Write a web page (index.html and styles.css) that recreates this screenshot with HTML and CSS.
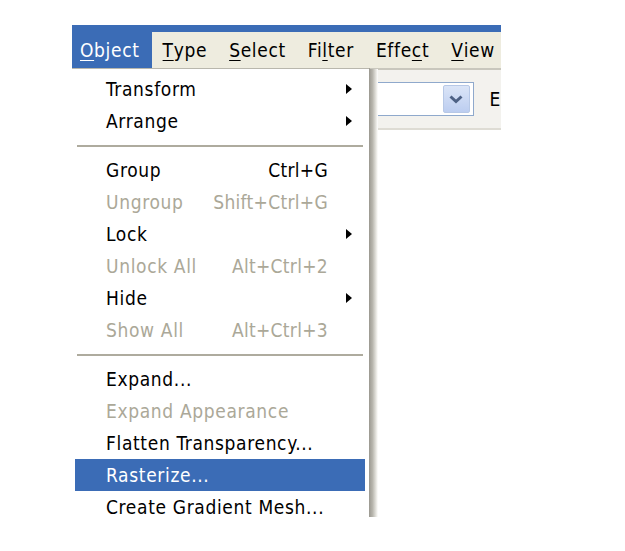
FILE: index.html
```html
<!DOCTYPE html>
<html>
<head>
<meta charset="utf-8">
<link rel="stylesheet" href="styles.css">
</head>
<body>
<div class="window">
  <div class="titlebar"></div>
  <div class="menubar">
    <span class="mb-item active"><u>O</u>bject</span>
    <span class="mb-item"><u>T</u>ype</span>
    <span class="mb-item"><u>S</u>elect</span>
    <span class="mb-item">Fi<u>l</u>ter</span>
    <span class="mb-item">Effe<u>c</u>t</span>
    <span class="mb-item"><u>V</u>iew</span>
  </div>
  <div class="toolbar">
    <div class="combo">
      <div class="combo-btn">
        <svg width="14" height="9" viewBox="0 0 14 9"><path d="M1.5 1.5 L7 6.5 L12.5 1.5" fill="none" stroke="#4d6185" stroke-width="3"/></svg>
      </div>
    </div>
    <span class="tb-label">E</span>
  </div>
  <div class="canvas"></div>

  <div class="menu">
    <div class="row"><span class="label">Transform</span><span class="key"></span><span class="arrow"></span></div>
    <div class="row"><span class="label">Arrange</span><span class="key"></span><span class="arrow"></span></div>
    <div class="sep"></div>
    <div class="row"><span class="label">Group</span><span class="key">Ctrl+G</span><span class="noarrow"></span></div>
    <div class="row disabled"><span class="label">Ungroup</span><span class="key">Shift+Ctrl+G</span><span class="noarrow"></span></div>
    <div class="row"><span class="label">Lock</span><span class="key"></span><span class="arrow"></span></div>
    <div class="row disabled"><span class="label">Unlock All</span><span class="key">Alt+Ctrl+2</span><span class="noarrow"></span></div>
    <div class="row"><span class="label">Hide</span><span class="key"></span><span class="arrow"></span></div>
    <div class="row disabled"><span class="label">Show All</span><span class="key">Alt+Ctrl+3</span><span class="noarrow"></span></div>
    <div class="sep"></div>
    <div class="row"><span class="label">Expand...</span><span class="key"></span><span class="noarrow"></span></div>
    <div class="row disabled"><span class="label">Expand Appearance</span><span class="key"></span><span class="noarrow"></span></div>
    <div class="row"><span class="label">Flatten Transparency...</span><span class="key"></span><span class="noarrow"></span></div>
    <div class="row selected"><span class="label">Rasterize...</span><span class="key"></span><span class="noarrow"></span></div>
    <div class="row"><span class="label">Create Gradient Mesh...</span><span class="key"></span><span class="noarrow"></span></div>
  </div>
</div>
</body>
</html>
```

FILE: styles.css
```css
html, body {
  margin: 0;
  padding: 0;
  background: #ffffff;
}

body {
  font-family: "DejaVu Sans Condensed", "DejaVu Sans", sans-serif;
  font-size: 19px;
  letter-spacing: 0.65px;
  color: #000;
}

.window {
  position: relative;
  margin: 25px 0 0 72px;
  width: 429px;
  height: 492px;
  overflow: hidden;
  display: flex;
  flex-direction: column;
  background: #ffffff;
}

.titlebar {
  height: 7px;
  background: #3b6cb6;
  flex: none;
}

.menubar {
  height: 36px;
  flex: none;
  display: flex;
  align-items: center;
  background: #eeecdf;
}

.mb-item {
  height: 100%;
  display: flex;
  align-items: center;
  padding: 0 11px;
  box-sizing: border-box;
  white-space: nowrap;
}

.mb-item u {
  text-underline-offset: 3px;
  text-decoration-thickness: 1px;
}

.mb-item.active {
  background: #3b6cb6;
  color: #ffffff;
  padding-left: 8px;
  padding-right: 12px;
  margin-top: -7px;
  height: calc(100% + 7px);
  padding-top: 7px;
}

.toolbar {
  height: 62px;
  flex: none;
  box-sizing: border-box;
  border-top: 2px solid #c9c7bd;
  border-bottom: 2px solid #dedcd4;
  background: #f3f2ee;
  display: flex;
  align-items: center;
  padding-left: 200px;
}

.combo {
  width: 205px;
  height: 34px;
  box-sizing: border-box;
  border: 1px solid #8fa9cc;
  background: #ffffff;
  display: flex;
  justify-content: flex-end;
  align-items: center;
  padding-right: 3px;
}

.combo-btn {
  width: 27px;
  height: 28px;
  box-sizing: border-box;
  border: 1px solid #b7c8e6;
  border-radius: 2px;
  background: linear-gradient(#dbe5f7, #bccdf0);
  display: flex;
  align-items: center;
  justify-content: center;
}

.tb-label {
  margin-left: 16px;
  font-size: 19px;
}

.canvas {
  flex: 1;
  background: #ffffff;
}

.menu {
  position: absolute;
  left: 0;
  top: 43px;
  width: 298px;
  box-sizing: border-box;
  background: #ffffff;
  border-top: 1px solid #b9b7ad;
  border-right: 1px solid #8d8b82;
  padding: 4px 4px 4px 3px;
}

.menu::after {
  content: "";
  position: absolute;
  top: 0;
  bottom: 0;
  left: 100%;
  width: 9px;
  background: linear-gradient(to right, #9a9890, #b8b6ae 40%, #e8e7e2 80%, #ffffff);
}

.row {
  height: 32px;
  line-height: 19px;
  display: flex;
  align-items: center;
  padding-left: 31px;
  white-space: nowrap;
}

.row .label {
  flex: 1;
}

.row .key {
  text-align: right;
  letter-spacing: 0.3px;
}

.row .arrow,
.row .noarrow {
  width: 37px;
  flex: none;
  height: 100%;
  position: relative;
}

.row .arrow::before {
  content: "";
  position: absolute;
  left: 18px;
  top: 11px;
  border-left: 6px solid #000;
  border-top: 5px solid transparent;
  border-bottom: 5px solid transparent;
}

.row.disabled {
  color: #aba898;
}

.row.selected {
  background: #3b6cb6;
  color: #ffffff;
}

.sep {
  height: 17px;
  display: flex;
  align-items: center;
  padding: 0 2px;
}

.sep::before {
  content: "";
  flex: 1;
  height: 2px;
  background: #aeab9e;
}
```
